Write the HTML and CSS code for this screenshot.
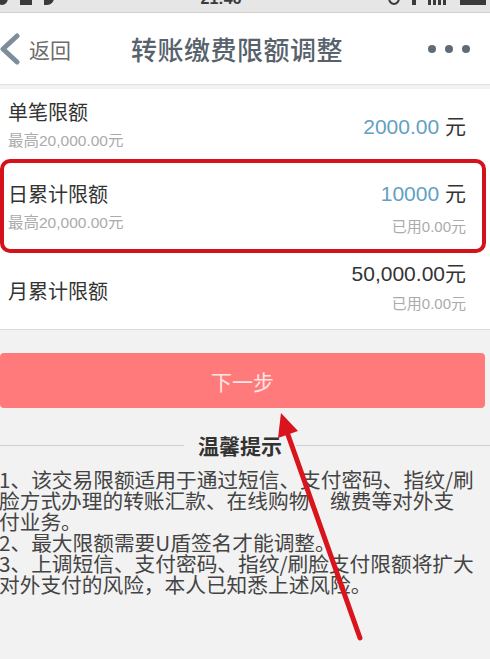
FILE: index.html
```html
<!DOCTYPE html>
<html lang="zh-CN">
  <head>
    <meta charset="UTF-8" />
    <meta name="viewport" content="width=device-width, initial-scale=1.0" />
    <title>转账缴费限额调整</title>
    <link rel="stylesheet" href="styles.css">
  </head>
  <body>
    <div class="page">
      <div class="status-bar">
        <div class="status-left">
          <span class="dot-icon"></span>
          <span class="bar-icon"></span>
          <span class="half-icon"></span>
        </div>
        <span class="status-time">21:46</span>
        <div class="status-right">
          <span class="ring-icon"></span>
          <span class="pin-icon"></span>
          <span class="signal-icon"></span>
          <span class="battery-icon"></span>
        </div>
      </div>

      <div class="nav-bar">
        <a class="back" href="#">
          <svg width="22" height="32" viewBox="0 0 22 32">
            <path d="M18 3 L4 16 L18 29" fill="none" stroke="#7d8d9c" stroke-width="5" stroke-linecap="round" stroke-linejoin="round" />
          </svg>
          <span>返回</span>
        </a>
        <h1 class="nav-title">转账缴费限额调整</h1>
        <div class="more">
          <span></span><span></span><span></span>
        </div>
      </div>

      <ul class="limit-list">
        <li class="limit-row single">
          <div class="limit-left">
            <span class="limit-name">单笔限额</span>
            <span class="limit-max">最高20,000.00元</span>
          </div>
          <div class="limit-right">
            <span class="limit-value"><em>2000.00</em> 元</span>
          </div>
        </li>
        <li class="limit-row daily">
          <div class="limit-left">
            <span class="limit-name">日累计限额</span>
            <span class="limit-max">最高20,000.00元</span>
          </div>
          <div class="limit-right">
            <span class="limit-value"><em>10000</em> 元</span>
            <span class="limit-used">已用0.00元</span>
          </div>
        </li>
        <li class="limit-row monthly">
          <div class="limit-left">
            <span class="limit-name">月累计限额</span>
          </div>
          <div class="limit-right">
            <span class="limit-value">50,000.00元</span>
            <span class="limit-used">已用0.00元</span>
          </div>
        </li>
      </ul>

      <button class="next-btn">下一步</button>

      <div class="tips">
        <h2 class="tips-title"><span>温馨提示</span></h2>
        <p>1、该交易限额适用于通过短信、支付密码、指纹/刷<br>脸方式办理的转账汇款、在线购物、缴费等对外支<br>付业务。</p>
        <p>2、最大限额需要U盾签名才能调整。</p>
        <p>3、上调短信、支付密码、指纹/刷脸支付限额将扩大<br>对外支付的风险，本人已知悉上述风险。</p>
      </div>

      <!-- annotation arrow drawn over the page -->
      <svg class="annotation" width="490" height="659" viewBox="0 0 490 659">
        <line x1="360" y1="638" x2="287" y2="432" stroke="#d9141c" stroke-width="5" stroke-linecap="round" />
        <polygon points="281,413 298,431 278,438" fill="#d9141c" />
      </svg>
    </div>
  </body>
</html>
```

FILE: styles.css
```css
* {
  box-sizing: border-box;
}

body {
  margin: 0;
  background-color: #f2f2f2;
  font-family: "Liberation Sans", "Noto Sans CJK SC", sans-serif;
  color: #333;
}

.page {
  position: relative;
  width: 490px;
  height: 659px;
  overflow: hidden;
}

/* status bar, only its lower edge is visible */
.status-bar {
  height: 13px;
  background: #e6e6e6;
  border-bottom: 1px solid #d2d2d2;
  display: flex;
  align-items: flex-end;
  justify-content: space-between;
  overflow: hidden;
  padding: 0 4px 7px 0;
}

.status-left,
.status-right {
  display: flex;
  align-items: flex-end;
  gap: 12px;
}

.status-left span,
.status-right span {
  display: block;
  height: 14px;
  background: #3a3a3a;
}

.dot-icon {
  width: 12px;
  border-radius: 50%;
  margin-left: -4px;
}

.bar-icon {
  width: 12px;
}

.half-icon {
  width: 10px;
  border-radius: 0 7px 7px 0;
}

.ring-icon {
  width: 12px;
  background: transparent !important;
  border: 2px solid #3a3a3a;
  border-radius: 50%;
}

.pin-icon {
  width: 4px;
}

.signal-icon {
  width: 20px;
  background: repeating-linear-gradient(90deg, #3a3a3a 0 3px, transparent 3px 5px) !important;
}

.battery-icon {
  width: 26px;
}

.status-time {
  font-size: 16px;
  font-weight: bold;
  line-height: 12px;
  color: #3a3a3a;
}

/* navigation */
.nav-bar {
  height: 72px;
  background: white;
  border-bottom: 1px solid #d9e0e7;
  display: flex;
  align-items: center;
  justify-content: space-between;
  padding: 0 20px 0 0;
  margin-bottom: 4px;
}

.back {
  display: flex;
  align-items: center;
  gap: 8px;
  color: #6d6d6d;
  text-decoration: none;
  font-family: "Noto Sans CJK SC", sans-serif;
  font-size: 21px;
  width: 104px;
}

.back svg {
  margin-left: -1px;
}

.nav-title {
  margin: 0;
  font-family: "Noto Sans CJK SC", sans-serif;
  font-size: 26px;
  font-weight: 500;
  color: #57626c;
  letter-spacing: 0.5px;
}

.more {
  width: 100px;
  display: flex;
  justify-content: flex-end;
  gap: 9px;
}

.more span {
  width: 8px;
  height: 8px;
  border-radius: 50%;
  background: #5f6b76;
}

/* limits */
.limit-list {
  list-style: none;
  margin: 0;
  padding: 0;
  background: white;
  border-bottom: 1px solid #dcdcdc;
}

.limit-row {
  display: flex;
  justify-content: space-between;
  padding: 0 24px 0 8px;
}

.limit-left,
.limit-right {
  display: flex;
  flex-direction: column;
}

.limit-right {
  align-items: flex-end;
}

.limit-name {
  font-family: "Noto Sans CJK SC", sans-serif;
  font-size: 20px;
  line-height: 26px;
  color: #333;
}

.limit-max,
.limit-used {
  font-size: 15px;
  line-height: 22px;
  color: #ababab;
}

.limit-max {
  margin-top: 5px;
  font-size: 15.5px;
}

.limit-value {
  font-size: 21px;
  line-height: 26px;
  color: #333;
}

.limit-value em {
  font-style: normal;
  color: #62a0c4;
}

.single {
  height: 70px;
  padding-top: 10px;
}

.single .limit-right {
  justify-content: center;
  padding-bottom: 4px;
}

.daily {
  height: 94px;
  margin-right: 4px;
  border: 4px solid #d4121b;
  border-radius: 10px;
  padding: 18px 16px 0 4px;
}

.daily .limit-value {
  margin-top: 0;
}

.daily .limit-used {
  margin-top: 9px;
}

.monthly {
  height: 76px;
  padding-top: 8px;
}

.monthly .limit-left {
  justify-content: center;
  padding-bottom: 8px;
}

.monthly .limit-used {
  margin-top: 6px;
}

/* button */
.next-btn {
  display: block;
  width: 485px;
  height: 55px;
  margin: 23px 0 0 0;
  border: none;
  border-radius: 4px;
  background-color: #ff7b7b;
  color: #ffe4e4;
  font-family: "Noto Sans CJK SC", sans-serif;
  font-size: 21px;
  cursor: pointer;
}

/* tips */
.tips {
  margin-top: 25px;
  font-family: "Noto Sans CJK SC", sans-serif;
}

.tips-title {
  display: flex;
  align-items: center;
  gap: 14px;
  margin: 0 0 12px 0;
  font-size: 21px;
  line-height: 24px;
  font-weight: bold;
  color: #333;
}

.tips-title::before,
.tips-title::after {
  content: "";
  flex: 1;
  height: 1px;
  background: #cfcfcf;
}

.tips-title::before {
  flex: 0 0 184px;
}

.tips p {
  margin: 0 0 0 -1px;
  font-size: 20.7px;
  line-height: 21px;
  color: #444;
  white-space: nowrap;
}

.annotation {
  position: absolute;
  left: 0;
  top: 0;
  pointer-events: none;
}
```
